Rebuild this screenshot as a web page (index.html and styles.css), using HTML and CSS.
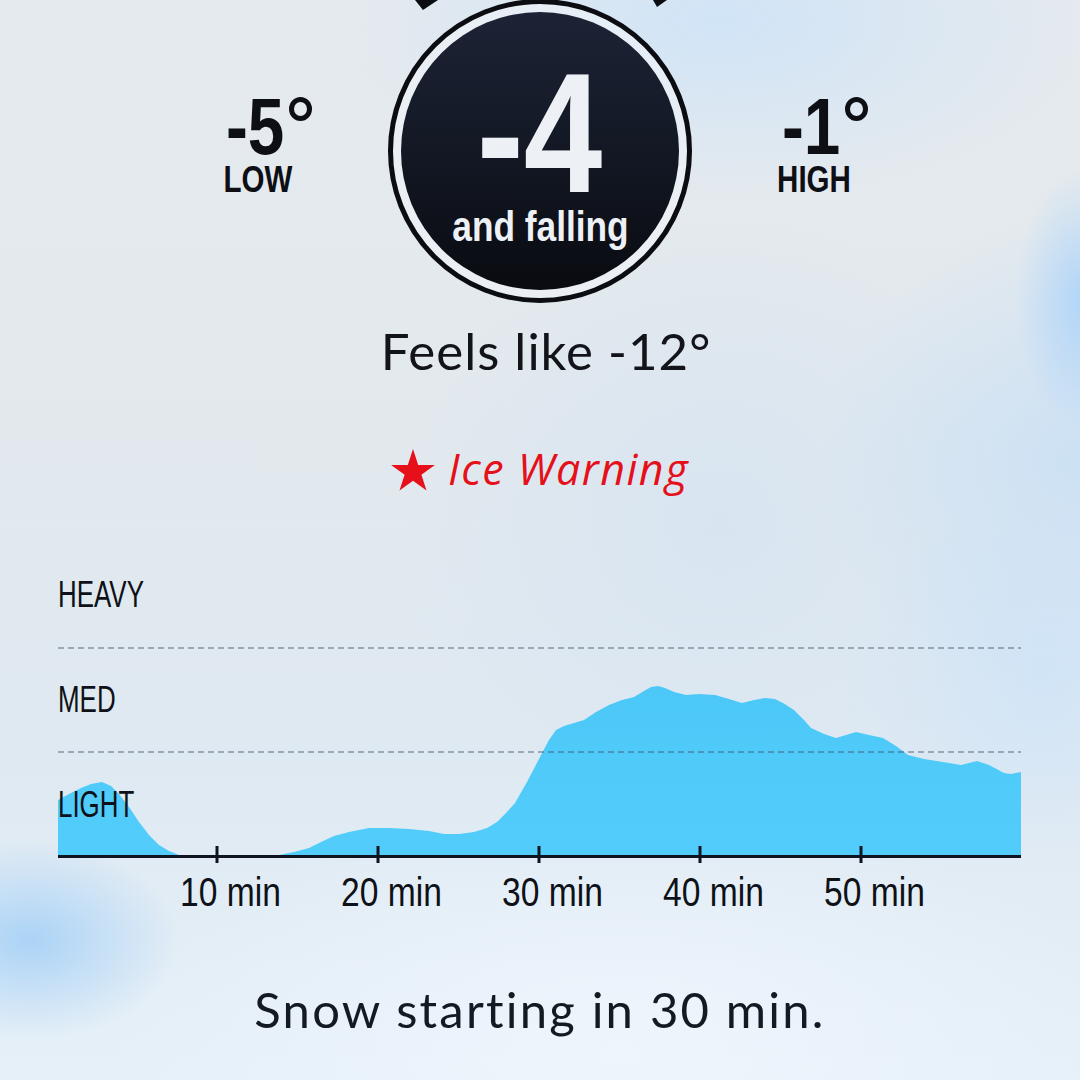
FILE: index.html
```html
<!DOCTYPE html>
<html>
<head>
<meta charset="utf-8">
<link rel="stylesheet" href="styles.css">
</head>
<body>
<div class="screen">
  <div class="top">
    <div class="side side-low">
      <div class="temp"><span class="num">-5</span><span class="deg"></span></div>
      <div class="side-label">LOW</div>
    </div>
    <div class="dial">
      <svg class="title-bits" viewBox="0 0 304 20" width="304" height="20">
        <polygon points="27,0 50,0 35,10" fill="#0b0d12"/>
        <polygon points="265,0 279,0 269,7" fill="#0b0d12"/>
      </svg>
      <div class="disc">
        <div class="now">-4</div>
        <div class="trend">and falling</div>
      </div>
    </div>
    <div class="side side-high">
      <div class="temp"><span class="num">-1</span><span class="deg"></span></div>
      <div class="side-label">HIGH</div>
    </div>
  </div>

  <div class="feels">Feels like -12°</div>

  <div class="warning">
    <svg class="star" viewBox="0 0 44 42" width="44" height="42">
      <polygon fill="#e5101a" points="22,0 27.2,15.9 43.9,15.9 30.4,25.7 35.5,41.6 22,31.8 8.5,41.6 13.6,25.7 0.1,15.9 16.8,15.9"/>
    </svg>
    <span class="warning-text">Ice Warning</span>
  </div>

  <div class="chart">
    <svg class="plot" viewBox="59 560 963 304" width="963" height="304">
      <defs>
        <linearGradient id="fill" x1="0" y1="0" x2="0" y2="1">
          <stop offset="0" stop-color="#4cc8f8"/>
          <stop offset="1" stop-color="#52cdfb"/>
        </linearGradient>
      </defs>
      <polygon fill="url(#fill)" points="59,857 59,800 70,794 82,788 92,784 103,782 112,786 120,794 130,807 140,822 150,835 160,845 170,851 180,855 188,857 265,857 280,855 295,852 310,848 322,842 335,836 350,832 370,828 390,828 410,829 430,831 445,834 460,834 475,832 488,828 498,822 507,813 516,803 528,782 541,757 550,740 557,730 565,726 575,723 585,720 597,712 610,705 623,700 635,697 645,691 652,687 659,686 666,688 675,692 687,695 700,694 716,695 730,699 743,703 755,700 766,698 776,699 784,703 795,710 805,720 812,728 825,734 837,738 847,735 857,732 870,735 884,738 897,746 909,755 925,759 944,762 962,765 978,761 990,765 1005,773 1012,774 1022,772 1022,857"/>
      <line x1="59" y1="648" x2="1022" y2="648" stroke="rgba(60,80,100,0.42)" stroke-width="2" stroke-dasharray="6 4"/>
      <line x1="59" y1="752" x2="1022" y2="752" stroke="rgba(60,80,100,0.42)" stroke-width="2" stroke-dasharray="6 4"/>
      <line x1="59" y1="856.5" x2="1022" y2="856.5" stroke="#0f1420" stroke-width="3"/>
      <g stroke="#0f1420" stroke-width="3">
        <line x1="218" y1="846" x2="218" y2="863"/>
        <line x1="379" y1="846" x2="379" y2="863"/>
        <line x1="540" y1="846" x2="540" y2="863"/>
        <line x1="701" y1="846" x2="701" y2="863"/>
        <line x1="862" y1="846" x2="862" y2="863"/>
      </g>
    </svg>
    <div class="levels">
      <div class="level">HEAVY</div>
      <div class="level">MED</div>
      <div class="level">LIGHT</div>
    </div>
  </div>

  <div class="ticks">
    <span class="tick">10 min</span>
    <span class="tick">20 min</span>
    <span class="tick">30 min</span>
    <span class="tick">40 min</span>
    <span class="tick">50 min</span>
  </div>

  <div class="summary">Snow starting in 30 min.</div>
</div>
</body>
</html>
```

FILE: styles.css
```css
html, body {
  margin: 0;
  padding: 0;
}

body {
  width: 1080px;
  height: 1080px;
  overflow: hidden;
}

.screen {
  width: 1080px;
  height: 1080px;
  overflow: hidden;
  display: flex;
  flex-direction: column;
  align-items: center;
  background:
    radial-gradient(ellipse 70px 130px at 1085px 300px, rgba(165, 208, 250, 0.8), rgba(165, 208, 250, 0) 100%),
    radial-gradient(ellipse 260px 240px at 1080px 460px, rgba(185, 218, 250, 0.55), rgba(185, 218, 250, 0) 100%),
    radial-gradient(ellipse 150px 100px at 30px 940px, rgba(165, 208, 246, 0.9), rgba(165, 208, 246, 0) 100%),
    radial-gradient(ellipse 200px 180px at 1040px 680px, rgba(200, 226, 250, 0.6), rgba(200, 226, 250, 0) 100%),
    radial-gradient(ellipse 380px 180px at 720px 20px, rgba(205, 227, 248, 0.85), rgba(205, 227, 248, 0) 100%),
    radial-gradient(ellipse 520px 240px at 620px 1050px, rgba(238, 246, 253, 0.95), rgba(238, 246, 253, 0) 100%),
    radial-gradient(ellipse 320px 300px at 720px 520px, rgba(212, 227, 242, 0.7), rgba(212, 227, 242, 0) 100%),
    linear-gradient(180deg, #e5eaee 0%, #e2e9ee 45%, #dfe9f2 70%, #e6f0f8 100%);
  font-family: "Lato", "Noto Sans", sans-serif;
  color: #111319;
}

/* ---------- top: low / dial / high ---------- */
.top {
  display: grid;
  grid-template-columns: 120px 304px 120px;
  column-gap: 66px;
  justify-content: center;
  margin-top: -1px;
}

.side {
  display: flex;
  flex-direction: column;
  align-items: center;
  padding-top: 92px;
  font-family: "Liberation Sans", Arial, sans-serif;
  font-weight: 700;
  color: #0d0f14;
}

.temp {
  display: flex;
  align-items: flex-start;
  font-size: 80px;
  line-height: 72px;
  margin-left: 14px;
}

.num {
  display: block;
  transform: scaleX(0.82);
  transform-origin: left center;
  margin-right: -13px;
}

.deg {
  width: 13px;
  height: 14px;
  border: 5px solid #0d0f14;
  border-radius: 50%;
  margin-left: 4px;
  margin-top: 6px;
}

.side-label {
  font-size: 36px;
  line-height: 34px;
  margin-top: 0;
  margin-right: 8px;
  transform: scaleX(0.82);
}

.dial {
  position: relative;
  width: 304px;
  height: 304px;
  box-sizing: border-box;
  border: 5px solid #0b0d12;
  border-radius: 50%;
  padding: 8px;
  background: rgba(240, 244, 248, 0.6);
}

.title-bits {
  position: absolute;
  left: -5px;
  top: -4px;
}

.disc {
  width: 100%;
  height: 100%;
  border-radius: 50%;
  background: linear-gradient(180deg, #1d2335 0%, #141926 45%, #090b10 100%);
  display: flex;
  flex-direction: column;
  align-items: center;
  color: #edf1f6;
  font-family: "Liberation Sans", Arial, sans-serif;
  font-weight: 700;
}

.now {
  font-size: 170px;
  line-height: 140px;
  margin-top: 51px;
  transform: scaleX(0.83);
}

.trend {
  font-size: 43px;
  line-height: 44px;
  margin-top: 1px;
  transform: scaleX(0.82);
  white-space: nowrap;
}

/* ---------- feels like / warning ---------- */
.feels {
  font-size: 51px;
  line-height: 60px;
  margin-top: 18px;
  margin-left: 12px;
  letter-spacing: 1px;
  color: #121419;
}

.warning {
  display: flex;
  align-items: center;
  gap: 13px;
  margin-top: 63px;
  color: #e5101a;
}

.star {
  display: block;
  margin-top: 2px;
}

.warning-text {
  font-family: "Open Sans", "Lato", sans-serif;
  font-size: 43px;
  line-height: 50px;
  font-style: italic;
  font-weight: 500;
  letter-spacing: 1.5px;
}

/* ---------- chart ---------- */
.chart {
  display: grid;
  width: 963px;
  margin-top: 66px;
  margin-left: -2px;
}

.plot,
.levels {
  grid-area: 1 / 1;
}

.plot {
  display: block;
}

.levels {
  display: flex;
  flex-direction: column;
  align-items: flex-start;
  gap: 71px;
  padding-top: 18px;
  font-family: "Liberation Sans", Arial, sans-serif;
  font-size: 36px;
  line-height: 34px;
  color: #0e1117;
}

.level {
  transform: scaleX(0.72);
  transform-origin: left center;
}

.ticks {
  display: flex;
  width: 963px;
  box-sizing: border-box;
  padding-left: 122px;
  margin-left: -2px;
  margin-top: 8px;
  font-family: "Liberation Sans", Arial, sans-serif;
  font-size: 40px;
  line-height: 40px;
  color: #0e1117;
}

.tick {
  width: 161px;
  white-space: nowrap;
  transform: scaleX(0.84);
  transform-origin: left center;
}

.summary {
  margin-top: 68px;
  font-size: 49px;
  line-height: 58px;
  color: #141a22;
  letter-spacing: 2.2px;
}
```
